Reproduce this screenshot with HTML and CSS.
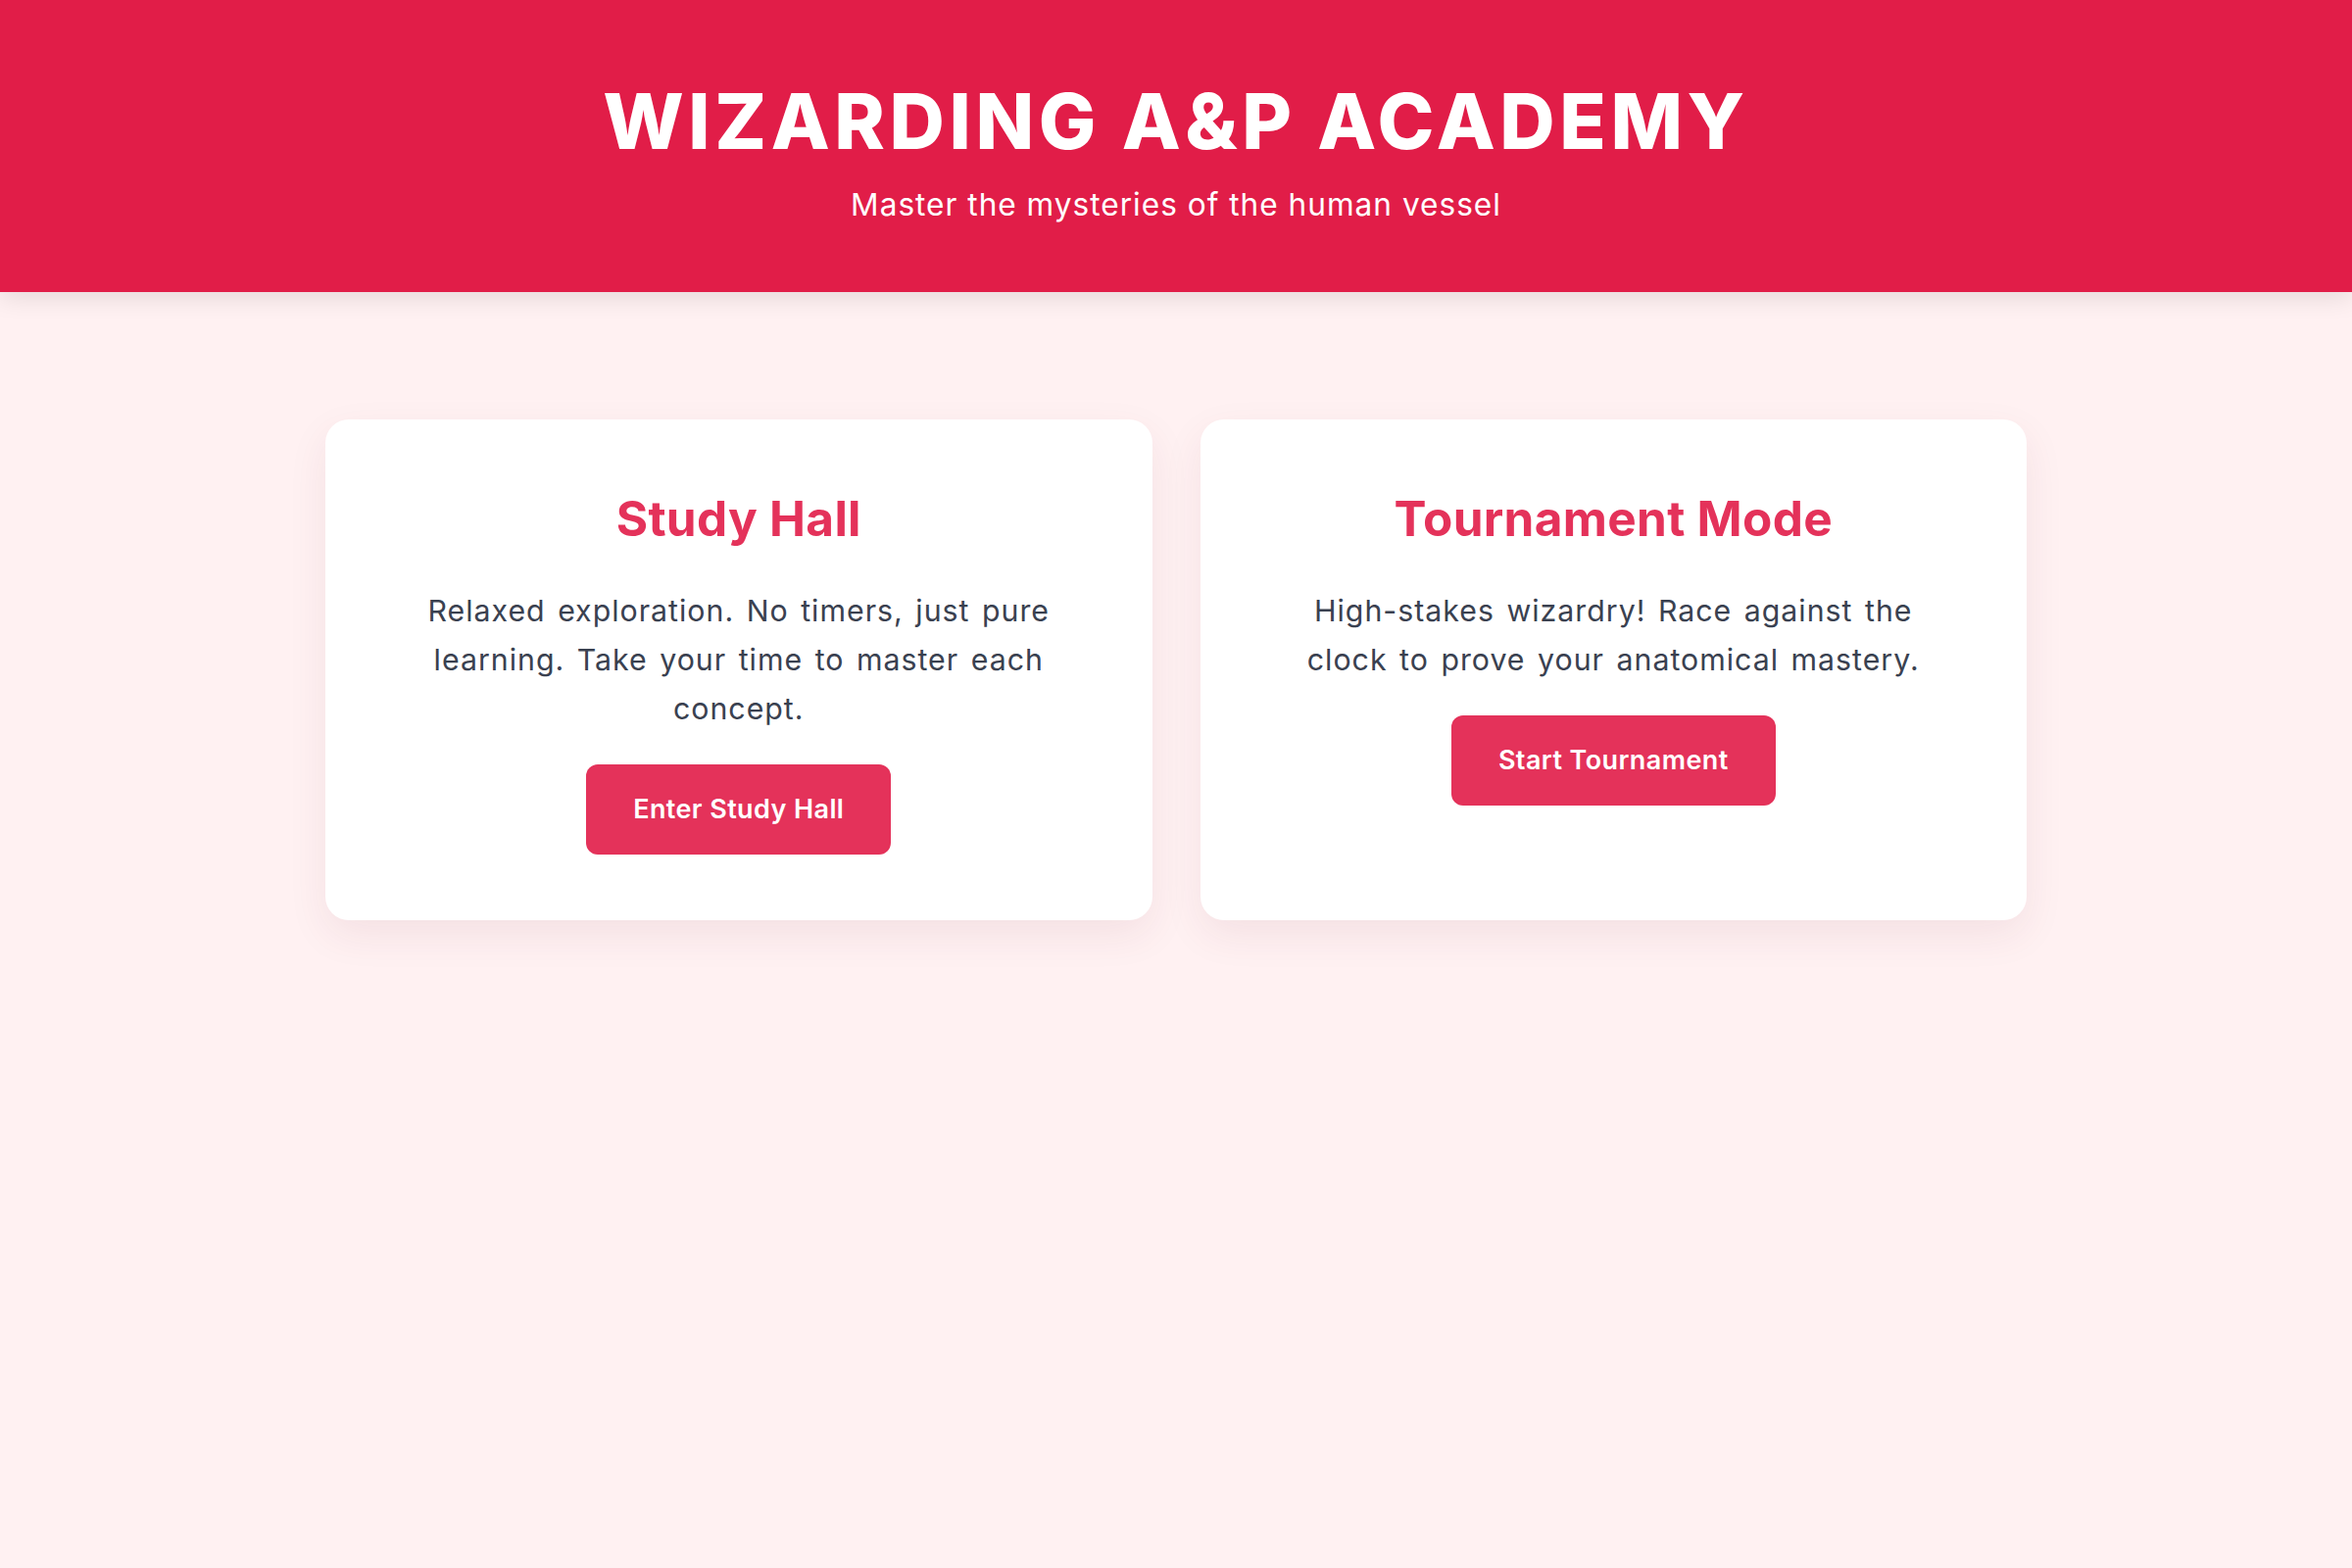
FILE: index.html
```html
<!DOCTYPE html>
<html lang="en">
<head>
<meta charset="utf-8">
<title>Wizarding A&amp;P Academy</title>
<link rel="stylesheet" href="styles.css">
</head>
<body>
<header class="site-header">
  <h1 class="site-title">WIZARDING A&amp;P ACADEMY</h1>
  <p class="site-subtitle">Master the mysteries of the human vessel</p>
</header>
<main class="modes">
  <section class="mode-card">
    <h2 class="mode-title">Study Hall</h2>
    <p class="mode-text">Relaxed exploration. No timers, just pure learning. Take your time to master each concept.</p>
    <button class="mode-button" type="button">Enter Study Hall</button>
  </section>
  <section class="mode-card">
    <h2 class="mode-title">Tournament Mode</h2>
    <p class="mode-text">High-stakes wizardry! Race against the clock to prove your anatomical mastery.</p>
    <button class="mode-button" type="button">Start Tournament</button>
  </section>
</main>
</body>
</html>
```
FILE: styles.css
```css
* { box-sizing: border-box; }

body {
  margin: 0;
  background: #fff1f2;
  font-family: Inter, "Open Sans", "Liberation Sans", sans-serif;
  min-height: 1600px;
}

.site-header {
  background: #e11d48;
  color: #ffffff;
  text-align: center;
  padding: 77px 0 66px;
  box-shadow: 0 6px 24px rgba(0, 0, 0, 0.1);
  position: relative;
}

.site-title {
  margin: 0 0 14px;
  font-size: 78px;
  line-height: 1.2;
  font-weight: 800;
  letter-spacing: 4.6px;
}

.site-subtitle {
  margin: 0;
  font-size: 31.6px;
  line-height: 1.5;
  font-weight: 400;
  letter-spacing: 1px;
}

.modes {
  width: 1736px;
  margin: 0 auto;
  padding-top: 130px;
  display: grid;
  grid-template-columns: 1fr 1fr;
  gap: 49px;
  align-items: stretch;
}

.mode-card {
  background: #ffffff;
  border-radius: 24px;
  padding: 72px 72px 67px;
  text-align: center;
  box-shadow: 0 15px 40px rgba(120, 40, 60, 0.08);
  display: flex;
  flex-direction: column;
  align-items: center;
}

.mode-title {
  margin: 0 0 38.6px;
  font-size: 49.5px;
  line-height: 1.2;
  font-weight: 700;
  color: #e4325a;
  letter-spacing: 0.3px;
}

.mode-text {
  margin: 0 0 32px;
  font-size: 30.3px;
  line-height: 50px;
  color: #3a4150;
  letter-spacing: 1px;
  word-spacing: 3px;
}

.mode-button {
  font-family: inherit;
  background: #e4325a;
  color: #ffffff;
  border: none;
  border-radius: 12px;
  padding: 24px 48px;
  font-size: 27px;
  line-height: 44px;
  font-weight: 600;
  letter-spacing: 0.4px;
  cursor: pointer;
}
```
